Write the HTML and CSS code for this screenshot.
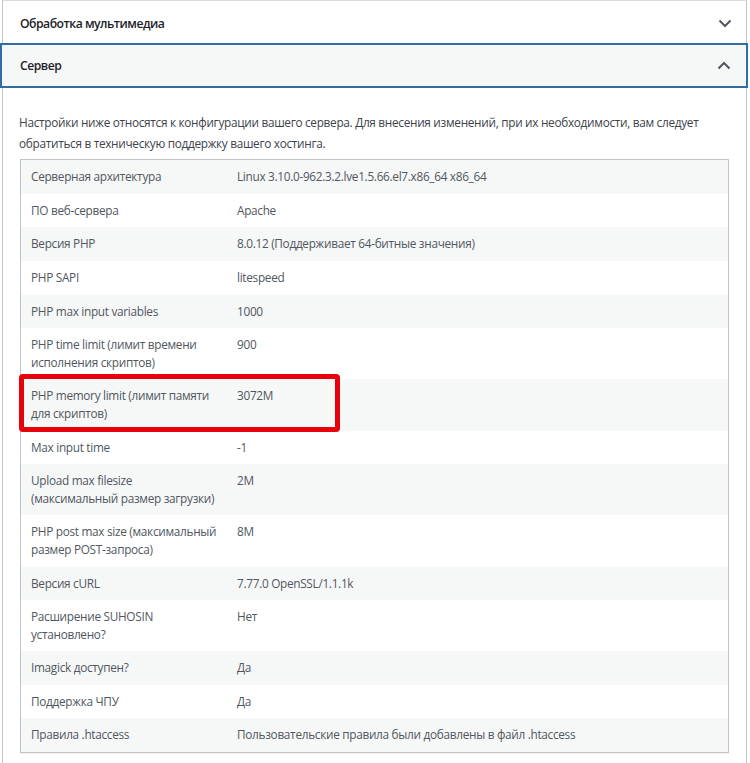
FILE: index.html
```html
<!DOCTYPE html>
<html lang="ru">
<head>
<meta charset="utf-8">
<title>Сервер</title>
<link rel="stylesheet" href="styles.css">
</head>
<body>
<div class="panel">
  <div class="acc-head">
    <span class="acc-title">Обработка мультимедиа</span>
    <svg class="chev" width="14" height="9" viewBox="0 0 14 9"><path d="M1.5 1.5l5.5 5.5 5.5-5.5" fill="none" stroke="#50575e" stroke-width="2"/></svg>
  </div>
  <div class="acc-head open">
    <span class="acc-title">Сервер</span>
    <svg class="chev" width="14" height="9" viewBox="0 0 14 9"><path d="M1.5 7.5l5.5-5.5 5.5 5.5" fill="none" stroke="#50575e" stroke-width="2"/></svg>
  </div>
  <div class="acc-body">
    <p class="desc">Настройки ниже относятся к конфигурации вашего сервера. Для внесения изменений, при их необходимости, вам следует обратиться в техническую поддержку вашего хостинга.</p>
    <div class="table-wrap">
      <table class="info">
        <tbody>
          <tr><td>Серверная архитектура</td><td>Linux 3.10.0-962.3.2.lve1.5.66.el7.x86_64 x86_64</td></tr>
          <tr><td>ПО веб-сервера</td><td>Apache</td></tr>
          <tr><td>Версия PHP</td><td>8.0.12 (Поддерживает 64-битные значения)</td></tr>
          <tr><td>PHP SAPI</td><td>litespeed</td></tr>
          <tr><td>PHP max input variables</td><td>1000</td></tr>
          <tr><td>PHP time limit (лимит времени исполнения скриптов)</td><td>900</td></tr>
          <tr><td>PHP memory limit (лимит памяти для скриптов)</td><td>3072M</td></tr>
          <tr><td>Max input time</td><td>-1</td></tr>
          <tr><td>Upload max filesize (максимальный размер загрузки)</td><td>2M</td></tr>
          <tr><td>PHP post max size (максимальный размер POST-запроса)</td><td>8M</td></tr>
          <tr><td>Версия cURL</td><td>7.77.0 OpenSSL/1.1.1k</td></tr>
          <tr><td>Расширение SUHOSIN установлено?</td><td>Нет</td></tr>
          <tr><td>Imagick доступен?</td><td>Да</td></tr>
          <tr><td>Поддержка ЧПУ</td><td>Да</td></tr>
          <tr><td>Правила .htaccess</td><td>Пользовательские правила были добавлены в файл .htaccess</td></tr>
        </tbody>
      </table>
      <div class="highlight"></div>
    </div>
  </div>
</div>
</body>
</html>
```

FILE: styles.css
```css
html, body {
  margin: 0;
  padding: 0;
  background: #ffffff;
}
body {
  font-family: "Open Sans", "Noto Sans", "Liberation Sans", sans-serif;
  color: #50575e;
  height: 763px;
  overflow: hidden;
}
.panel {
  margin-left: 2px;
  width: 745px;
  height: 763px;
  border-left: 1px solid #c3c4c7;
  border-right: 1px solid #c3c4c7;
  border-top: 1px solid #dcdcde;
  box-sizing: border-box;
}
.acc-head {
  height: 42px;
  display: flex;
  align-items: center;
  justify-content: space-between;
  padding: 2px 14px 0 17px;
  box-sizing: border-box;
}
.acc-title {
  font-size: 12.2px;
  font-weight: 600;
  letter-spacing: -0.5px;
  color: #1d2327;
}
.acc-head.open {
  height: 45px;
  margin: 0 -2px 0 -3px;
  padding: 0 15px 0 18px;
  background: #f6f7f7;
  border: 2px solid #2f6ea6;
}
.chev {
  display: block;
}
.acc-body {
  padding: 24px 17px 0 16px;
}
.desc {
  margin: 0 0 6px 0;
  font-size: 11.8px;
  letter-spacing: -0.3px;
  line-height: 20.6px;
  color: #3c434a;
}
.table-wrap {
  position: relative;
  width: 709px;
  margin-left: 1px;
}
.info {
  width: 709px;
  border-collapse: collapse;
  border: 1px solid #c3c4c7;
  box-shadow: 0 1px 1px rgba(0, 0, 0, 0.05);
  font-size: 11.8px;
  letter-spacing: -0.3px;
  line-height: 17.6px;
  color: #50575e;
}
.info td {
  padding: 8px 10px;
  vertical-align: top;
  text-align: left;
}
.info td:first-child {
  width: 188px;
  padding-right: 8px;
}
.info tr:nth-child(odd) td {
  background: #f6f7f7;
}
.highlight {
  position: absolute;
  left: -1px;
  top: 215px;
  width: 321px;
  height: 58px;
  box-sizing: border-box;
  border: 5px solid #e8000b;
  border-radius: 4px;
}
```
